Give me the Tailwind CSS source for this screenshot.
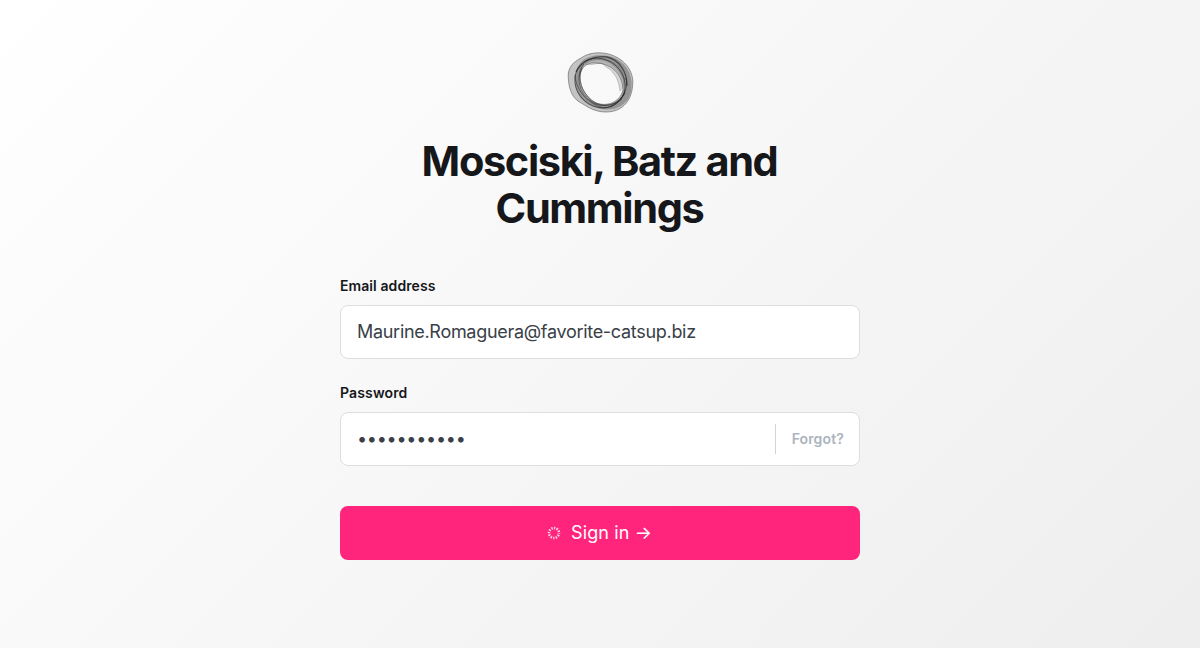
<!DOCTYPE html>
<html lang="en">
<head>
<meta charset="utf-8">
<title>Sign in</title>
<script src="https://cdn.jsdelivr.net/npm/@tailwindcss/browser@4"></script>
</head>
<body class="h-[648px] overflow-hidden bg-linear-[135deg,#ffffff,#eeeeee] font-['Inter',sans-serif] text-[#15171a] antialiased">
<main class="mx-auto flex w-[520px] flex-col pt-[50px]">
  <header class="flex flex-col items-center">
    <svg class="h-[66px] w-[70px]" viewBox="0 0 70 66" fill="none" stroke-linejoin="round">
      <path fill-rule="evenodd" fill="#555" fill-opacity=".32" stroke="#333" stroke-opacity=".65" stroke-width=".7" d="M3.2 26C3 18 8 12 16 8C22 4 28 2.8 34 2.8C52 3 67 15 67.8 31C68 50 58 62 41 62C31 62 24 58 18 54C9 50 3.5 42 3.2 26ZM15.5 23C13 34 20 47 31 53C45 58 57 49 58 39C57 23 46 14 32 13C24 12 18 15 15.5 23Z"/>
      <path fill-rule="evenodd" fill="#333" fill-opacity=".32" d="M17 11C26 4 43 3 55 11C66 19 69 33 65 45C60 57 49 61 36 59C20 56 10 46 10 31C10 23 12 16 17 11ZM20 14C13 22 12 36 19 45C25 52 35 56 44 55C55 52 61 42 58 30C54 17 43 9 31 10C27 10 23 11 20 14Z"/>
      <path fill="#888" fill-opacity=".3" stroke="#444" stroke-opacity=".4" stroke-width=".6" d="M20 14C27 16 33 12 38 14C41 18 45 18 48 23C51 26 54 32 55 41C61 35 60 24 54 17C46 9 30 6 20 14Z"/>
      <g stroke="#1c1c1c" stroke-opacity=".62">
        <ellipse cx="35" cy="33" rx="26.5" ry="23.5" transform="rotate(42 35 33)" stroke-width=".9"/>
        <path d="M19 14C10 25 13 44 29 53C40 59 54 54 60 43" stroke-width=".9"/>
        <path d="M17 18C12 29 17 41 25 49C34 57 47 57 57 49" stroke-width=".7"/>
        <path d="M11 22C16 11 30 5 42 7C55 10 62 22 62 36" stroke-width="1.3"/>
        <path d="M10 25C11 42 25 55 39 58C49 57 57 50 60 41M61 28C64 42 55 52 45 57" stroke-width=".8"/>
      </g>
    </svg>
    <h1 class="mt-[22px] pr-px text-center text-[41.5px] leading-[47px] font-bold tracking-[-0.033em]">Mosciski, Batz and<br>Cummings</h1>
  </header>
  <form class="mt-[44px] flex flex-col">
    <label class="text-[14px] leading-[20px] font-semibold tracking-[0.006em]" for="email">Email address</label>
    <input id="email" type="text" value="Maurine.Romaguera@favorite-catsup.biz" class="mt-[9px] h-[54px] rounded-lg border border-[#dddedf] bg-white px-4 pb-[2px] text-[18px] font-normal tracking-[-0.0165em] text-[#394047]">
    <label class="mt-[24px] text-[14px] leading-[20px] font-semibold tracking-[0.01em]" for="password">Password</label>
    <div class="mt-[9px] flex h-[54px] items-center rounded-lg border border-[#dddedf] bg-white pr-[15px] pl-4">
      <input id="password" type="password" value="catsupcatsu" class="min-w-0 flex-1 pb-[2px] text-[18px] font-normal tracking-[-0.014em] text-[#394047]">
      <button type="button" class="flex h-[30px] items-center border-l border-[#ced4d9] pb-[2px] pl-4 text-[14px] font-semibold tracking-[0.01em] text-[#abb4be]">Forgot?</button>
    </div>
    <button type="button" class="mt-[40px] flex h-[54px] items-center justify-center rounded-lg bg-[#ff247c] pr-px text-[18px] font-normal text-white">
      <svg class="mr-[10px] h-[14px] w-[14px]" viewBox="-7 -7 14 14" fill="none" stroke="#fff" stroke-opacity=".8">
        <circle r="5" stroke-width="2.6" stroke-dasharray="1.4 1.218" stroke-dashoffset=".7"/>
      </svg>
      <span class="pb-[2px] tracking-[0.006em]">Sign in →</span>
    </button>
  </form>
</main>
</body>
</html>
